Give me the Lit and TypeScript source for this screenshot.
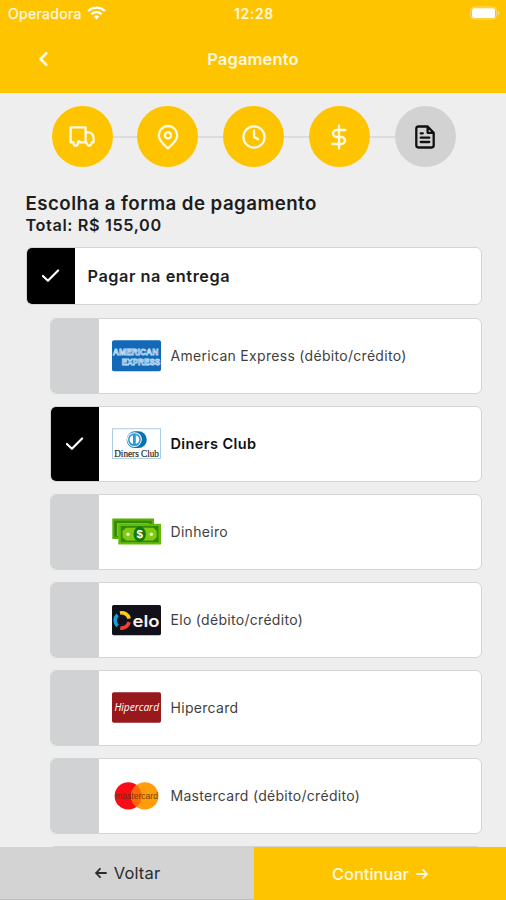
import { LitElement, html, svg, css } from "lit";
import { customElement, property, state } from "lit/decorators.js";
import { classMap } from "lit/directives/class-map.js";

type Brand = "amex" | "diners" | "cash" | "elo" | "hiper" | "master";

const methods: { id: Brand; label: string }[] = [
  { id: "amex", label: "American Express (débito/crédito)" },
  { id: "diners", label: "Diners Club" },
  { id: "cash", label: "Dinheiro" },
  { id: "elo", label: "Elo (débito/crédito)" },
  { id: "hiper", label: "Hipercard" },
  { id: "master", label: "Mastercard (débito/crédito)" },
];

const steps = {
  truck: svg`<path d="M3.4 17.3H0.6V2.3H15.6V17.3H9.8M15.6 7.3H18.8C21.6 7.3 23.6 10.4 23.6 13.4V17.3H22"/><path d="M3.4 17.3C3.4 19.9 4.4 20.8 5.8 20.8S7.8 19.7 8 17.3C8.2 15.7 9.6 15.7 9.8 17.3M15.6 17.3C16.4 15.7 16.8 20.8 18.9 20.8S21.4 18.4 22 17.3"/>`,
  pin: svg`<path d="M21.2 10.2C21.2 16.3 12 23.3 12 23.3S2.8 16.3 2.8 10.2a9.2 9.2 0 0 1 18.4 0Z"/><circle cx="12" cy="10.2" r="3.1"/>`,
  clock: svg`<circle cx="12" cy="12" r="10.6"/><path d="M12 5.7V12l4.2 2.3"/>`,
  dollar: svg`<path d="M12 0.3V23.7M18.3 5H9.5a3.5 3.5 0 0 0 0 7h5a3.5 3.5 0 0 1 0 7H5.3"/>`,
  file: svg`<path d="M14.6 1.5H5.4A2.2 2.2 0 0 0 3.3 3.7V20.3A2.2 2.2 0 0 0 5.4 22.5H18.6A2.2 2.2 0 0 0 20.7 20.3V7.8ZM14.6 1.5V7.8H20.7M16.3 12.7H7.7M16.3 17H7.7M9.8 8.3H7.7"/>`,
};

const brands = {
  amex: svg`<rect y="2.3" width="49" height="31" rx="2" fill="#1369b8"/>
    <text x="0.8" y="16.6" textLength="45.5" lengthAdjust="spacingAndGlyphs" font-family="Liberation Sans, sans-serif" font-weight="700" font-size="9.5" fill="#2f7dc6" stroke="#c7e0f6" stroke-width="0.8">AMERICAN</text>
    <text x="9.8" y="26.8" textLength="38.5" lengthAdjust="spacingAndGlyphs" font-family="Liberation Sans, sans-serif" font-weight="700" font-size="9.5" fill="#2f7dc6" stroke="#c7e0f6" stroke-width="0.8">EXPRESS</text>`,
  diners: svg`<rect x="0.5" y="2.7" width="48" height="29.7" fill="#fff" stroke="#a9cce8"/>
    <path d="M23 5.3h3.4a8.4 8.4 0 0 1 0 16.8H23a8.4 8.4 0 0 1 0-16.8Z" fill="#0872b5"/>
    <circle cx="22.4" cy="13.6" r="7.4" fill="#fff"/><circle cx="22.4" cy="13.6" r="6.4" fill="#2b9ad4"/>
    <path d="M21 9.3a4.4 4.4 0 0 0 0 8.6ZM23.8 9.3a4.4 4.4 0 0 1 0 8.6Z" fill="#fff"/>
    <text x="2.2" y="30.6" textLength="44.8" lengthAdjust="spacingAndGlyphs" font-family="Liberation Serif, serif" font-size="10.5" fill="#222" stroke="#222" stroke-width="0.2">Diners Club</text>`,
  cash: svg`<path d="M0.3 4.5H42V25H0.3Z" fill="#58ae05"/><path d="M2.3 6.8H39.8V11H6V22.8H2.3Z" fill="#318c05"/><path d="M5 9H37v3H8v10H5Z" fill="#80c914"/>
    <rect x="6.3" y="9.8" width="42.7" height="20.7" fill="#64b90b"/><rect x="8.8" y="12" width="37.7" height="16.2" fill="#318c05"/>
    <path d="M14 13.7H41.3L44.7 17v6.2l-3.4 3.4H14l-3.4-3.4V17Z" fill="#80c914"/><ellipse cx="27.7" cy="20.2" rx="6.2" ry="7.6" fill="#12790f"/>
    <circle cx="16" cy="20.2" r="1.7" fill="#e8f4c8"/><circle cx="39.4" cy="20.2" r="1.7" fill="#e8f4c8"/>
    <text x="27.7" y="24.4" text-anchor="middle" font-family="Liberation Sans, sans-serif" font-weight="700" font-size="11.5" fill="#fff">$</text>`,
  elo: svg`<rect y="3" width="49" height="30.3" rx="1.7" fill="#121018"/>
    <g fill="none" stroke-width="3.6"><path d="M5.6 12.8A7.6 7.6 0 0 0 5.6 24" stroke="#14a0dc"/><path d="M8 10.9A7.8 7.8 0 0 1 17.2 16.6" stroke="#ffcb16"/><path d="M17.1 20A7.8 7.8 0 0 1 8.2 26" stroke="#ef432e"/></g>
    <text x="20.5" y="24.8" textLength="27" lengthAdjust="spacingAndGlyphs" font-family="Inter, sans-serif" font-weight="600" font-size="16.5" fill="#f4f4f4">elo</text>`,
  hiper: svg`<rect y="2.3" width="49" height="30.5" rx="1.8" fill="#98191c"/>
    <text x="2.4" y="20.8" textLength="44.6" lengthAdjust="spacingAndGlyphs" font-family="Open Sans, sans-serif" font-style="italic" font-weight="500" font-size="11" fill="#fff">Hipercard</text>`,
  master: svg`<circle cx="16.3" cy="17.9" r="13.7" fill="#f80d17"/><circle cx="32.8" cy="17.9" r="13.7" fill="#ff9e0a"/><path d="M24.5 7a13.7 13.7 0 0 1 0 21.8a13.7 13.7 0 0 1 0-21.8Z" fill="#ff6908"/>
    <text x="3" y="21" textLength="43" lengthAdjust="spacingAndGlyphs" font-family="Liberation Sans, sans-serif" font-size="9.5" fill="#5b2b0d" fill-opacity="0.85">mastercard</text>`,
};

@customElement("check-option")
export class CheckOption extends LitElement {
  @property({ type: Boolean, reflect: true }) checked = false;

  static styles = css`
    :host { display: flex; box-sizing: border-box; border: 1px solid #d3d4d5; border-radius: 6px; background: #fff; }
    .box { width: 48.5px; flex: none; display: flex; align-items: center; justify-content: center; background: #d0d2d3; border-radius: 5px 0 0 5px; }
    .box.on { background: #000; }
    .content { flex: 1; display: flex; align-items: center; }
    .tick { width: 18px; height: 14px; fill: none; stroke: #fff; stroke-width: 2.2; stroke-linecap: round; stroke-linejoin: round; }
  `;

  render() {
    return html`
      <div class=${classMap({ box: true, on: this.checked })}>
        ${this.checked ? html`<svg class="tick" viewBox="0 0 18 14"><path d="M0.9 7 5.9 11.7 16.1 1.5" /></svg>` : null}
      </div>
      <div class="content"><slot></slot></div>
    `;
  }
}

@customElement("app-root")
export class AppRoot extends LitElement {
  @state() private selected: Brand = "diners";

  static styles = css`
    :host { display: flex; flex-direction: column; height: 900px; overflow: hidden; background: #eee; color: #1d1d1d; font-family: Inter, "Liberation Sans", sans-serif; }
    .header { height: 93px; flex: none; background: #ffc400; color: #fff8e2; }
    .status { height: 26px; display: grid; grid-template-columns: 1fr auto 1fr; align-items: center; padding: 0 6px 0 8px; font-size: 14px; }
    .carrier { display: flex; align-items: center; gap: 5px; letter-spacing: 0.35px; -webkit-text-stroke: 0.25px; }
    .time { font-weight: 600; letter-spacing: 0.6px; }
    .battery { justify-self: end; width: 30px; height: 14px; }
    .wifi { width: 19px; height: 14px; }
    .nav { height: 66px; display: grid; grid-template-columns: 1fr auto 1fr; align-items: center; }
    .back { width: 10px; height: 16px; margin-left: 38px; }
    .line-icon { fill: none; stroke: currentColor; stroke-width: 2.3; stroke-linecap: round; stroke-linejoin: round; }
    .nav .back { stroke-width: 2.7; }
    .title { font-size: 16.5px; font-weight: 600; letter-spacing: 0.15px; }
    .main { flex: 1; min-height: 0; overflow: hidden; padding: 13px 24px 0 25.5px; }
    .steps { display: flex; align-items: center; margin: 0 26.5px 0 26px; }
    .step { width: 61px; height: 61px; flex: none; border-radius: 50%; background: #ffc400; color: #fffae8; display: flex; align-items: center; justify-content: center; }
    .step.idle { background: #d2d2d2; color: #111; }
    .step svg { width: 24px; height: 24px; overflow: visible; }
    .link { flex: 1; height: 2px; background: #dcdcdc; }
    .heading { margin: 25px 0 0; font-size: 18.7px; line-height: 23px; font-weight: 600; letter-spacing: 0.45px; }
    .total { font-size: 16.3px; line-height: 20px; font-weight: 600; letter-spacing: 0.6px; }
    .group { height: 58px; margin-top: 12px; }
    .group-label { margin-left: 12.5px; font-size: 16.3px; font-weight: 600; letter-spacing: 0.55px; }
    .list { display: flex; flex-direction: column; gap: 12px; margin: 12.5px 0 0 24px; }
    .item { height: 76px; flex: none; cursor: pointer; }
    .brand { width: 49px; height: 35px; margin: 0 10px 0 12.5px; flex: none; overflow: visible; }
    .name { font-size: 14px; color: #3f3f3f; letter-spacing: 0.3px; }
    .name.on { color: #111; font-size: 14.5px; letter-spacing: 0.4px; font-weight: 600; }
    .footer { height: 53px; flex: none; display: grid; grid-template-columns: 254px 1fr; }
    .action { border: 0; padding: 0; display: flex; align-items: center; justify-content: center; gap: 7px; font: inherit; font-size: 16.5px; letter-spacing: 0.15px; background: #d3d3d3; color: #2b2b2b; border-bottom: 1px solid #bbb; }
    .action:first-child { padding-left: 1px; padding-bottom: 1px; }
    .action.next { background: #ffc400; color: #fff8e2; border: 0; font-weight: 500; font-size: 16.4px; letter-spacing: 0; }
    .arrow { width: 12px; height: 12px; stroke-width: 1.8; }
  `;

  private step(icon: unknown, idle = false) {
    return html`<div class=${classMap({ step: true, idle })}><svg class="line-icon" viewBox="0 0 24 24">${icon}</svg></div>`;
  }

  render() {
    const link = html`<div class="link"></div>`;
    return html`
      <header class="header">
        <div class="status">
          <div class="carrier">
            <span>Operadora</span>
            <svg class="wifi" viewBox="0 0 19 14"><g fill="none" stroke="#fff" stroke-width="2.3"><path d="M1.2 5a11.8 11.8 0 0 1 16.6 0M4.4 8.3a7.3 7.3 0 0 1 10.2 0" /></g><path d="M9.5 13.6 6.7 10.7a4 4 0 0 1 5.6 0Z" fill="#fff" /></svg>
          </div>
          <span class="time">12:28</span>
          <svg class="battery" viewBox="0 0 30 14"><rect x="0.6" y="1" width="25.8" height="12" rx="3.5" fill="none" stroke="#ffdc73" /><rect x="2" y="2.3" width="23" height="9.6" rx="2" fill="#fff" /><path d="M28 5v4.3c1.8-.8 1.8-3.5 0-4.3Z" fill="#ffe18b" /></svg>
        </div>
        <div class="nav">
          <svg class="back line-icon" viewBox="0 0 10 16"><path d="M8.2 2.3 2.6 8l5.6 5.7" /></svg>
          <span class="title">Pagamento</span>
        </div>
      </header>
      <main class="main">
        <div class="steps">
          ${this.step(steps.truck)}${link}${this.step(steps.pin)}${link}${this.step(steps.clock)}${link}${this.step(steps.dollar)}${link}${this.step(steps.file, true)}
        </div>
        <h1 class="heading">Escolha a forma de pagamento</h1>
        <div class="total">Total: R$ 155,00</div>
        <check-option class="group" checked><span class="group-label">Pagar na entrega</span></check-option>
        <div class="list">
          ${methods.map((m) => html`
            <check-option class="item" ?checked=${m.id === this.selected} @click=${() => (this.selected = m.id)}>
              <svg class="brand" viewBox="0 0 49 35">${brands[m.id]}</svg>
              <span class=${classMap({ name: true, on: m.id === this.selected })}>${m.label}</span>
            </check-option>`)}
          <check-option class="item"></check-option>
        </div>
      </main>
      <footer class="footer">
        <button class="action"><svg class="arrow line-icon" viewBox="0 0 12 12"><path d="M11 6H1M5 1.8 1 6l4 4.2" /></svg>Voltar</button>
        <button class="action next">Continuar<svg class="arrow line-icon" viewBox="0 0 12 12"><path d="M1 6h10M7 1.8 11 6l-4 4.2" /></svg></button>
      </footer>
    `;
  }
}
